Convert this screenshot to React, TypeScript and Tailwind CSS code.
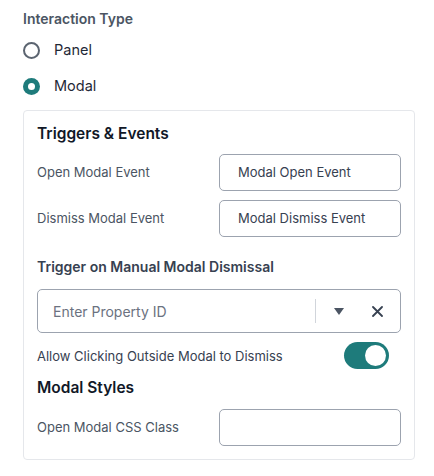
import { useState } from "react"

function Radio({ label, checked }: { label: string; checked?: boolean }) {
  return (
    <label className="flex h-9 items-center gap-[14px]">
      {checked ? (
        <span className="flex h-[17px] w-[17px] items-center justify-center rounded-full bg-[#1e7b7b]">
          <span className="h-[7px] w-[7px] rounded-full bg-white" />
        </span>
      ) : (
        <span className="h-[17px] w-[17px] rounded-full border-2 border-[#5b6470] bg-white" />
      )}
      <span className="text-[14.5px] text-[#1f2937]">{label}</span>
    </label>
  )
}

function FieldRow({ label, value }: { label: string; value?: string }) {
  return (
    <div className="flex items-center">
      <span className="w-[182px] text-[13px] text-[#4b5563]">{label}</span>
      <div className="flex h-[37px] flex-1 items-center rounded-[5px] border border-[#9ca3af] px-[18px] text-[13px] text-[#374151]">
        {value}
      </div>
    </div>
  )
}

export default function App() {
  const [on, setOn] = useState(true)

  return (
    <div className="w-[434px] bg-white px-[23px] pt-[9px] font-['Inter',sans-serif]">
      <div className="mb-[3px] text-[14px] font-semibold leading-5 text-[#4b5563]">Interaction Type</div>
      <Radio label="Panel" />
      <Radio label="Modal" checked />

      <div className="mt-[6px] w-[392px] rounded-[4px] border border-[#e5e7eb] px-[13px] pb-[13px] pt-[11px]">
        <h3 className="text-[15.5px] font-semibold leading-6 text-[#111827]">Triggers &amp; Events</h3>
        <div className="mt-[8px] flex flex-col gap-[9px]">
          <FieldRow label="Open Modal Event" value="Modal Open Event" />
          <FieldRow label="Dismiss Modal Event" value="Modal Dismiss Event" />
        </div>

        <div className="mt-[20px] text-[14px] font-semibold leading-5 text-[#374151]">
          Trigger on Manual Modal Dismissal
        </div>
        <div className="mt-[12px] flex h-[44px] items-center rounded-[5px] border border-[#9ca3af] pl-[15px]">
          <span className="flex-1 text-[14px] text-[#6b7280]">Enter Property ID</span>
          <span className="h-[24px] w-px bg-[#d1d5db]" />
          <span className="flex w-[46px] justify-center">
            <svg width="10" height="7" viewBox="0 0 10 7">
              <path d="M0 0h10L5 7z" fill="#4b5563" />
            </svg>
          </span>
          <span className="mr-[7px] flex w-[31px] justify-center">
            <svg width="11" height="11" viewBox="0 0 11 11">
              <path d="M1 1l9 9M10 1l-9 9" stroke="#374151" strokeWidth="1.8" strokeLinecap="round" />
            </svg>
          </span>
        </div>

        <div className="mt-[9px] flex items-center justify-between pr-[12px]">
          <span className="text-[13px] leading-5 text-[#374151]">Allow Clicking Outside Modal to Dismiss</span>
          <button
            onClick={() => setOn(!on)}
            className={`flex h-[27px] w-[45px] items-center rounded-full px-[3px] ${on ? "justify-end bg-[#1e7b7b]" : "justify-start bg-[#d1d5db]"}`}
          >
            <span className="h-[21px] w-[21px] rounded-full bg-white" />
          </button>
        </div>

        <h3 className="mt-[7px] text-[15.5px] font-semibold leading-6 text-[#111827]">Modal Styles</h3>
        <div className="mt-[9px]">
          <FieldRow label="Open Modal CSS Class" />
        </div>
      </div>
    </div>
  )
}
